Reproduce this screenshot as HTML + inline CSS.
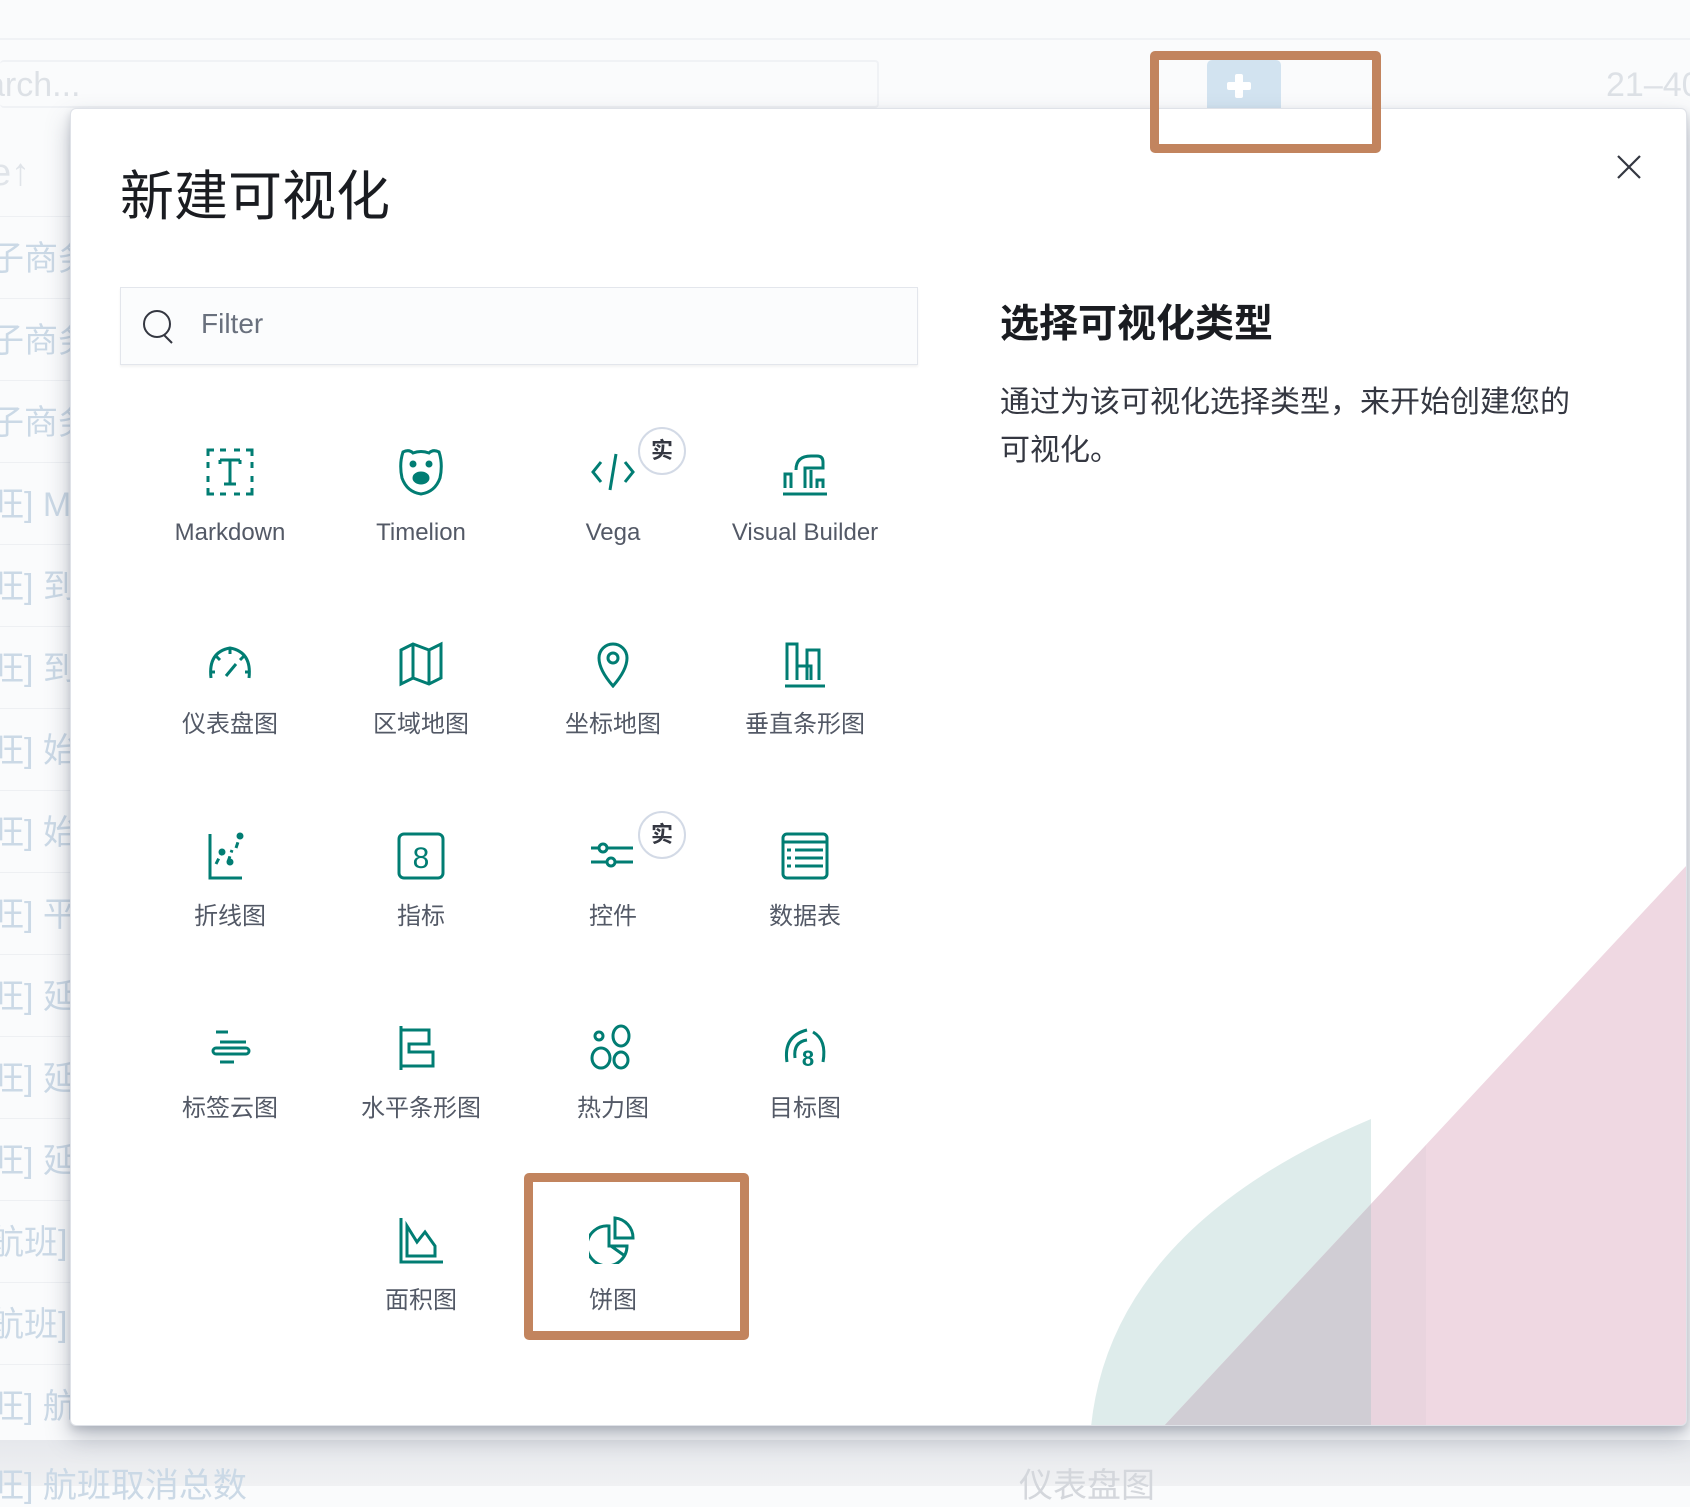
<!DOCTYPE html>
<html><head><meta charset="utf-8">
<style>
*{margin:0;padding:0;box-sizing:border-box}
body{width:1690px;height:1486px;overflow:hidden;background:#fafbfc;font-family:"Liberation Sans","Noto Sans CJK SC",sans-serif;position:relative}
.bg{position:absolute;color:#cbd9e6;font-size:34px;white-space:nowrap}
.row{position:absolute;left:0;width:70px;height:1px;background:#eef0f3}
.modal{position:absolute;left:70px;top:108px;width:1617px;height:1318px;background:#fff;border:1px solid #dfe2e8;border-radius:6px;box-shadow:0 12px 24px rgba(80,90,110,.35),0 4px 8px rgba(80,90,110,.2);overflow:hidden}
.title{position:absolute;left:49px;top:56px;font-size:54px;color:#1a1c21;line-height:64px;font-weight:400}
.filter{position:absolute;left:49px;top:178px;width:798px;height:78px;background:#fbfcfd;border:1px solid #e3e6ec;box-shadow:0 2px 2px rgba(0,0,0,.05)}
.filter span{position:absolute;left:80px;top:20px;font-size:28px;color:#69707d}
.item{position:absolute;width:190px;text-align:center}
.item svg{position:absolute;left:71px;top:0}
.item .lb{position:absolute;left:0;width:190px;top:68px;font-size:24px;color:#535966;line-height:34px}
.badge{position:absolute;width:48px;height:48px;border-radius:50%;border:2px solid #d3dae6;background:#fff;font-size:22px;color:#343741;text-align:center;line-height:43px;font-weight:bold}
.ob{position:absolute;border:9px solid #c2845e;border-radius:5px}
</style></head><body>
<div style="position:absolute;left:0;top:38px;width:1690px;height:2px;background:#f0f2f5"></div>
<div style="position:absolute;left:0;top:60px;width:879px;height:48px;border:2px solid #f0f2f5;border-left:none;border-radius:4px"></div>
<div class="bg" style="left:-14px;top:66px;color:#dde1e6">arch...</div>
<div class="bg" style="left:1606px;top:66px;color:#dde1e6">21–40</div>
<div style="position:absolute;left:1207px;top:60px;width:74px;height:50px;background:#d2e3f0;border-radius:5px 5px 0 0"></div>
<div style="position:absolute;left:1235px;top:74px;width:8px;height:24px;background:#fff;border-radius:2px"></div>
<div style="position:absolute;left:1227px;top:82px;width:24px;height:8px;background:#fff;border-radius:2px"></div>
<div class="bg" style="left:-10px;top:152px;color:#e0e4e9;font-size:38px">e↑</div>
<div class="bg" style="left:-10px;top:231px">子商务</div>
<div class="bg" style="left:-10px;top:313px">子商务</div>
<div class="bg" style="left:-10px;top:395px">子商务</div>
<div class="bg" style="left:-10px;top:477px">旺] Ma</div>
<div class="bg" style="left:-10px;top:559px">旺] 到</div>
<div class="bg" style="left:-10px;top:641px">旺] 到</div>
<div class="bg" style="left:-10px;top:723px">旺] 始</div>
<div class="bg" style="left:-10px;top:805px">旺] 始</div>
<div class="bg" style="left:-10px;top:887px">旺] 平</div>
<div class="bg" style="left:-10px;top:969px">旺] 延</div>
<div class="bg" style="left:-10px;top:1051px">旺] 延</div>
<div class="bg" style="left:-10px;top:1133px">旺] 延</div>
<div class="bg" style="left:-10px;top:1215px">航班]</div>
<div class="bg" style="left:-10px;top:1297px">航班]</div>
<div class="bg" style="left:-10px;top:1379px">旺] 航</div>
<div class="row" style="top:216px"></div><div class="row" style="top:298px"></div><div class="row" style="top:380px"></div><div class="row" style="top:462px"></div><div class="row" style="top:544px"></div><div class="row" style="top:626px"></div><div class="row" style="top:708px"></div><div class="row" style="top:790px"></div><div class="row" style="top:872px"></div><div class="row" style="top:954px"></div><div class="row" style="top:1036px"></div><div class="row" style="top:1118px"></div><div class="row" style="top:1200px"></div><div class="row" style="top:1282px"></div><div class="row" style="top:1364px"></div>
<div style="position:absolute;left:0;top:1440px;width:1690px;height:46px;background:linear-gradient(#e6e8ec,#f0f1f3)"></div>
<div class="bg" style="left:-10px;top:1458px">旺] 航班取消总数</div>
<div class="bg" style="left:1019px;top:1458px;color:#d4d7dc">仪表盘图</div>

<div class="modal">
<svg style="position:absolute;left:0;top:0" width="1617" height="1318">
<path d="M1020 1318 Q1040 1120 1300 1010 L1300 1318Z" fill="#deeceb"/>
<path d="M1616 756 L1616 1318 L1092 1318Z" fill="#ecd7e0"/>
<path d="M1300 1318 L1300 1095 L1092 1318Z" fill="#d0cdd4"/>
<path d="M1300 1318 L1300 1095 L1355 1036 L1355 1318Z" fill="#e9d4de"/>
<path d="M1355 1318 L1355 1036 L1616 756 L1616 1318Z" fill="#efd8e2"/>
</svg>
<div class="title">新建可视化</div>
<svg style="position:absolute;left:1545px;top:45px" width="26" height="26"><path d="M2 2 L24 24 M24 2 L2 24" stroke="#343741" stroke-width="2.2"/></svg>
<div class="filter">
<svg style="position:absolute;left:21px;top:21px" width="34" height="36" viewBox="0 0 34 36"><circle cx="15" cy="15" r="13" fill="none" stroke="#343741" stroke-width="2"/><path d="M22 26 L30 34" stroke="#343741" stroke-width="2"/></svg>
<span>Filter</span></div>
<div style="position:absolute;left:929px;top:184px;font-size:39px;font-weight:bold;color:#1a1c21">选择可视化类型</div>
<div style="position:absolute;left:929px;top:270px;width:580px;font-size:30px;line-height:48px;color:#343741">通过为该可视化选择类型，来开始创建您的可视化。</div>
</div>

<div class="item" style="left:135px;top:448px"><svg width="48" height="48" viewBox="0 0 48 48" fill="none" stroke="#017d73" stroke-width="3"><path d="M2 8V2h6M14 2h6M28 2h6M40 2h6v6M46 14v6M46 28v6M46 40v6h-6M34 46h-6M20 46h-6M8 46H2v-6M2 34v-6M2 20v-6"/><path d="M14 12h20M24 12v24M18 36h12M14 12v4M34 12v4"/></svg><div class="lb">Markdown</div></div>
<div class="item" style="left:326px;top:448px"><svg width="48" height="48" viewBox="0 0 48 48" fill="none" stroke="#017d73" stroke-width="3"><path d="M6 4 Q12 1 16 5 Q24 2 32 5 Q36 1 42 4 Q46 16 43 30 Q38 44 24 46 Q10 44 5 30 Q2 16 6 4Z"/><circle cx="16" cy="16" r="2" fill="#017d73"/><circle cx="32" cy="16" r="2" fill="#017d73"/><ellipse cx="24" cy="30" rx="7" ry="5" fill="#017d73"/></svg><div class="lb">Timelion</div></div>
<div class="item" style="left:518px;top:448px"><svg width="48" height="48" viewBox="0 0 48 48" fill="none" stroke="#017d73" stroke-width="3"><path d="M12 14L4 24l8 10M36 14l8 10-8 10M27 6l-6 36"/></svg><div class="lb">Vega</div></div>
<div class="item" style="left:710px;top:448px"><svg width="48" height="48" viewBox="0 0 48 48" fill="none" stroke="#017d73" stroke-width="3"><path d="M2 46h44M4 40V26h6v14M15 22Q15 8 30 8h6q6 0 6 6v6H24v20M30 22v18M36 40v-8h6v8"/></svg><div class="lb">Visual Builder</div></div>

<div class="item" style="left:135px;top:640px"><svg width="48" height="48" viewBox="0 0 48 48" fill="none" stroke="#017d73" stroke-width="3"><path d="M5 38Q2 12 24 8Q46 12 43 38M24 8v6M10 16l4 4M38 16l-4 4M4 32h5M44 32h-5M20 36l10-12"/></svg><div class="lb">仪表盘图</div></div>
<div class="item" style="left:326px;top:640px"><svg width="48" height="48" viewBox="0 0 48 48" fill="none" stroke="#017d73" stroke-width="3"><path d="M4 10l12-6 16 6 12-6v34l-12 6-16-6-12 6Z M16 4v34M32 10v34"/></svg><div class="lb">区域地图</div></div>
<div class="item" style="left:518px;top:640px"><svg width="48" height="48" viewBox="0 0 48 48" fill="none" stroke="#017d73" stroke-width="3"><path d="M24 46Q10 30 10 18a14 14 0 0 1 28 0q0 12-14 28Z"/><circle cx="24" cy="18" r="5"/></svg><div class="lb">坐标地图</div></div>
<div class="item" style="left:710px;top:640px"><svg width="48" height="48" viewBox="0 0 48 48" fill="none" stroke="#017d73" stroke-width="3"><path d="M4 46h40M6 40V4h10v36M16 26h14v14M26 40V10h12v30"/></svg><div class="lb">垂直条形图</div></div>

<div class="item" style="left:135px;top:832px"><svg width="48" height="48" viewBox="0 0 48 48" fill="none" stroke="#017d73" stroke-width="3"><path d="M4 2v44h32"/><path d="M10 32l5-10M22 30l4-12M30 16l4-12" stroke-dasharray="6 4"/><circle cx="16" cy="20" r="2" fill="#017d73"/><circle cx="24" cy="30" r="2" fill="#017d73"/><circle cx="34" cy="4" r="2" fill="#017d73"/></svg><div class="lb">折线图</div></div>
<div class="item" style="left:326px;top:832px"><svg width="48" height="48" viewBox="0 0 48 48" fill="none" stroke="#017d73" stroke-width="3"><rect x="2" y="2" width="44" height="44" rx="5"/><text x="24" y="36" text-anchor="middle" font-size="30" fill="#017d73" stroke="none" font-family="Liberation Sans">8</text></svg><div class="lb">指标</div></div>
<div class="item" style="left:518px;top:832px"><svg width="48" height="48" viewBox="0 0 48 48" fill="none" stroke="#017d73" stroke-width="3"><path d="M2 16h8M18 16h26M2 30h16M26 30h18"/><circle cx="14" cy="16" r="4"/><circle cx="22" cy="30" r="4"/></svg><div class="lb">控件</div></div>
<div class="item" style="left:710px;top:832px"><svg width="48" height="48" viewBox="0 0 48 48" fill="none" stroke="#017d73" stroke-width="3"><rect x="2" y="2" width="44" height="44" rx="4"/><path d="M2 10h44M6 18h4M14 18h28M6 26h4M14 26h28M6 34h4M14 34h28"/></svg><div class="lb">数据表</div></div>

<div class="item" style="left:135px;top:1024px"><svg width="48" height="48" viewBox="0 0 48 48" fill="none" stroke="#017d73" stroke-width="3"><path d="M10 8h12M14 18h26M10 24h30a3 3 0 0 1 0 6H10a3 3 0 0 1 0-6M14 38h14"/></svg><div class="lb">标签云图</div></div>
<div class="item" style="left:326px;top:1024px"><svg width="48" height="48" viewBox="0 0 48 48" fill="none" stroke="#017d73" stroke-width="3"><path d="M4 2v44M4 6h28v14H12v8h24v14H4"/></svg><div class="lb">水平条形图</div></div>
<div class="item" style="left:518px;top:1024px"><svg width="48" height="48" viewBox="0 0 48 48" fill="none" stroke="#017d73" stroke-width="3"><circle cx="10" cy="12" r="4"/><ellipse cx="32" cy="12" rx="8" ry="10"/><ellipse cx="12" cy="34" rx="9" ry="10"/><ellipse cx="32" cy="36" rx="7" ry="8"/></svg><div class="lb">热力图</div></div>
<div class="item" style="left:710px;top:1024px"><svg width="48" height="48" viewBox="0 0 48 48" fill="none" stroke="#017d73" stroke-width="3"><path d="M6 38Q2 12 26 6M32 8Q46 16 42 38M14 34Q12 18 26 16"/><text x="27" y="42" text-anchor="middle" font-size="22" font-weight="bold" fill="#017d73" stroke="none" font-family="Liberation Sans">8</text></svg><div class="lb">目标图</div></div>

<div class="item" style="left:326px;top:1216px"><svg width="48" height="48" viewBox="0 0 48 48" fill="none" stroke="#017d73" stroke-width="3"><path d="M4 2v44h42M10 40V10l10 16 8-10 10 14v10Z"/></svg><div class="lb">面积图</div></div>
<div class="item" style="left:518px;top:1216px"><svg width="48" height="48" viewBox="0 0 48 48" fill="none" stroke="#017d73" stroke-width="3"><path d="M20 10A20 20 0 1 0 38 30H20Z"/><path d="M26 2A20 20 0 0 1 44 22H26Z"/><path d="M22 30l14 10"/></svg><div class="lb">饼图</div></div>

<div class="badge" style="left:638px;top:427px">实</div>
<div class="badge" style="left:638px;top:811px">实</div>

<div class="ob" style="left:1150px;top:51px;width:231px;height:102px"></div>
<div class="ob" style="left:524px;top:1173px;width:225px;height:167px"></div>
</body></html>
